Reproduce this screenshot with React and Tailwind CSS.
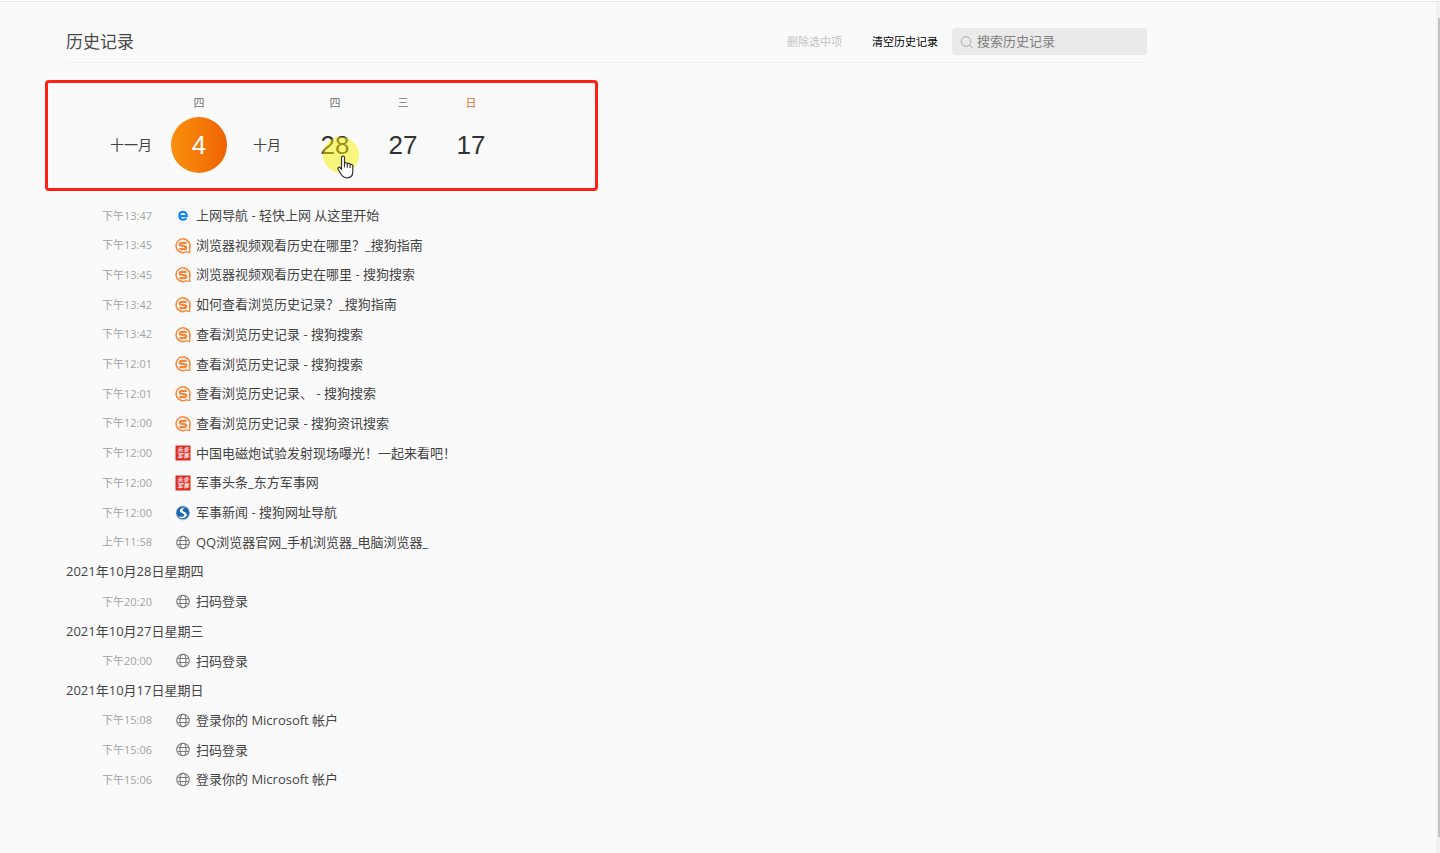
import { Fragment, useState } from 'react';

const months = [
  { label: '十一月', days: [{ date: '2021-11-04', day: 4, week: '四' }] },
  {
    label: '十月',
    days: [
      { date: '2021-10-28', day: 28, week: '四', hovered: true },
      { date: '2021-10-27', day: 27, week: '三' },
      { date: '2021-10-17', day: 17, week: '日', holiday: true },
    ],
  },
];

const groups = [
  {
    id: '2021-11-04',
    items: [
      { time: '下午13:47', icon: 'nav', title: '上网导航 - 轻快上网 从这里开始' },
      { time: '下午13:45', icon: 'sogou', title: '浏览器视频观看历史在哪里？_搜狗指南' },
      { time: '下午13:45', icon: 'sogou', title: '浏览器视频观看历史在哪里 - 搜狗搜索' },
      { time: '下午13:42', icon: 'sogou', title: '如何查看浏览历史记录？_搜狗指南' },
      { time: '下午13:42', icon: 'sogou', title: '查看浏览历史记录 - 搜狗搜索' },
      { time: '下午12:01', icon: 'sogou', title: '查看浏览历史记录 - 搜狗搜索' },
      { time: '下午12:01', icon: 'sogou', title: '查看浏览历史记录、 - 搜狗搜索' },
      { time: '下午12:00', icon: 'sogou', title: '查看浏览历史记录 - 搜狗资讯搜索' },
      { time: '下午12:00', icon: 'military', title: '中国电磁炮试验发射现场曝光！一起来看吧！' },
      { time: '下午12:00', icon: 'military', title: '军事头条_东方军事网' },
      { time: '下午12:00', icon: 'sogouNav', title: '军事新闻 - 搜狗网址导航' },
      { time: '上午11:58', icon: 'globe', title: 'QQ浏览器官网_手机浏览器_电脑浏览器_' },
    ],
  },
  {
    id: '2021-10-28',
    heading: '2021年10月28日星期四',
    items: [{ time: '下午20:20', icon: 'globe', title: '扫码登录' }],
  },
  {
    id: '2021-10-27',
    heading: '2021年10月27日星期三',
    items: [{ time: '下午20:00', icon: 'globe', title: '扫码登录' }],
  },
  {
    id: '2021-10-17',
    heading: '2021年10月17日星期日',
    items: [
      { time: '下午15:08', icon: 'globe', title: '登录你的 Microsoft 帐户' },
      { time: '下午15:06', icon: 'globe', title: '扫码登录' },
      { time: '下午15:06', icon: 'globe', title: '登录你的 Microsoft 帐户' },
    ],
  },
];

function NavIcon() {
  return (
    <svg viewBox="0 0 16 16" className="h-4 w-4 shrink-0" aria-hidden="true">
      <path d="M8 .6a7.200 7.200 0 1 0 0 14.400h6.600V8A7 7 0 0 0 8 .6Z" fill="#fff" stroke="#dde4ea" strokeWidth="0.8" />
      <path
        d="M4.500 8.200H11.800C11.900 5.400 10.300 3.900 8.100 3.900S4.300 5.500 4.300 7.800s1.500 3.900 3.900 3.900c1.400 0 2.400-.4 3.200-1.400"
        fill="none"
        stroke="#1684f5"
        strokeWidth="2.200"
      />
    </svg>
  );
}

function SogouIcon() {
  return (
    <svg viewBox="0 0 16 16" className="h-4 w-4 shrink-0" fill="none" stroke="#fb8435" aria-hidden="true">
      <path d="M12 13.400A6.900 6.900 0 1 1 14.300 10.600" strokeWidth="1.500" />
      <path d="M14.700 7.500V14.300H12.200" strokeWidth="1.300" />
      <path
        d="M11.700 4.900H6.900C5.500 4.900 4.800 5.500 4.800 6.400S5.500 7.700 6.700 7.800l2.600.3c1.300.1 2 .6 2 1.500S10.700 11.100 9.300 11.100H4.300"
        strokeWidth="2.100"
      />
    </svg>
  );
}

function MilitaryIcon() {
  return (
    <svg viewBox="0 0 16 16" className="h-4 w-4 shrink-0" aria-hidden="true">
      <rect x="0.500" y="0.500" width="15" height="15" fill="#e02d22" />
      <g fill="#fff" fillOpacity="0.9" fontSize="6" fontWeight="700" fontStyle="italic" textAnchor="middle">
        <text x="8" y="7">头条</text>
        <text x="8" y="13">军事</text>
      </g>
    </svg>
  );
}

function SogouNavIcon() {
  return (
    <svg viewBox="0 0 16 16" className="h-4 w-4 shrink-0" aria-hidden="true">
      <circle cx="8" cy="8" r="7.400" fill="#c9d0d6" />
      <circle cx="7.800" cy="7.800" r="6.500" fill="#1667ad" />
      <path
        d="M10.800 2.200C6.800 2.500 4.400 4.200 4.800 6.100 5.300 8.500 9.300 8 9.200 10.200 9.100 12 5.800 12.200 3.200 11.500 6 14.600 11.600 13.500 11.800 10.100 12 6.800 7.600 7.100 7.500 5.300 7.400 4 9 3 10.800 2.200Z"
        fill="#fff"
      />
    </svg>
  );
}

function GlobeIcon() {
  return (
    <svg viewBox="0 0 16 16" className="h-4 w-4 shrink-0" fill="none" stroke="#7a7a7a" strokeWidth="1.100" aria-hidden="true">
      <circle cx="8" cy="7.500" r="6.300" />
      <ellipse cx="8" cy="7.500" rx="3" ry="6.300" />
      <path d="M2.300 5.500H13.700M2.300 9.500H13.700" />
    </svg>
  );
}

const icons = {
  nav: NavIcon,
  sogou: SogouIcon,
  military: MilitaryIcon,
  sogouNav: SogouNavIcon,
  globe: GlobeIcon,
};

function Pointer() {
  return (
    <span className="pointer-events-none absolute top-5 left-[22px] h-[44px] w-9">
      <span className="block h-9 w-9 rounded-full bg-[#faf000]/50" />
      <svg viewBox="0 0 17 24" className="absolute top-[18px] left-3.5 h-6 w-[17px]">
        <path
          d="M4.500 14.500V2.500C4.500.600 7.500.600 7.500 2.500V8.500C8 7.300 10.200 7.500 10.300 9 11 7.900 13 8.300 13.100 9.700 14 8.900 15.800 9.400 15.800 11V16.500C15.800 20.500 13.500 22.800 10 22.800 6.500 22.800 5 21 3.600 18.500L1 14.200C.300 12.600 2.300 11.500 3.300 12.800Z"
          fill="#fff"
          stroke="#333"
          strokeWidth="1.200"
          strokeLinejoin="round"
        />
        <path d="M7.500 8.500V12.500M10.300 9V12.800M13.100 9.700V13" stroke="#333" strokeWidth="1.100" />
      </svg>
    </span>
  );
}

function Calendar({ selected, onSelect }) {
  return (
    <nav
      aria-label="日期"
      className="flex w-[553px] max-w-full rounded border-[3px] border-[#ff2015] pt-2 pb-[15px] pl-[49px]"
    >
      {months.map((month) => (
        <Fragment key={month.label}>
          <div className="mt-[26px] flex h-14 w-[68px] items-center justify-center text-sm text-[#444]">
            {month.label}
          </div>
          {month.days.map((d) => (
            <div key={d.date} className="flex w-[68px] flex-col items-center">
              <span className={`mb-0.5 text-[11px] leading-6 ${d.holiday ? 'text-[#e0703c]' : 'text-[#777]'}`}>
                {d.week}
              </span>
              <div className="relative flex w-full justify-center">
                <button
                  type="button"
                  onClick={() => onSelect(d.date)}
                  className={`h-14 w-14 rounded-full font-['Liberation_Sans',sans-serif] text-[26px] ${
                    selected === d.date ? 'bg-linear-to-r from-[#f9900c] to-[#ef6303] text-white' : 'text-[#333]'
                  }`}
                >
                  {d.day}
                </button>
                {d.hovered && <Pointer />}
              </div>
            </div>
          ))}
        </Fragment>
      ))}
    </nav>
  );
}

function HistoryItem({ item }) {
  const Icon = icons[item.icon];
  return (
    <li className="flex items-center">
      <span className="w-[86px] text-right text-[11px] text-[#a3a3a3]">{item.time}</span>
      <a href="#" className="ml-[23px] flex items-center gap-[5px] text-[13px] text-[#444]">
        <Icon />
        {item.title}
      </a>
    </li>
  );
}

export default function App() {
  const [selected, setSelected] = useState('2021-11-04');
  const [query, setQuery] = useState('');

  return (
    <div className="min-h-screen bg-white pt-px font-['Open_Sans','Noto_Sans_CJK_SC',sans-serif]">
      <div className="flex min-h-[calc(100vh-1px)] border-t border-[#e3e6e8] bg-[#fafafa]">
        <main className="flex-1 px-[45px] pt-[26px]">
          <header className="ml-[21px] flex max-w-[1081px] items-center border-b border-[#efefef] pb-[7px]">
            <h1 className="text-[17px] leading-[27px] text-[#4a4a4a]">历史记录</h1>
            <button type="button" disabled className="ml-auto pt-0.5 text-[11px] text-[#c4c4c4]">
              删除选中项
            </button>
            <button type="button" className="ml-[30px] pt-0.5 text-[11px] text-black">
              清空历史记录
            </button>
            <label className="ml-3.5 flex h-[27px] w-[195px] items-center gap-0.5 rounded bg-[#eaeaea] px-[7px]">
              <svg viewBox="0 0 16 16" className="h-4 w-4 shrink-0" fill="none" stroke="#aaa" aria-hidden="true">
                <circle cx="7" cy="7.500" r="4.800" />
                <path d="M10.500 11L13.500 14" />
              </svg>
              <input
                type="text"
                value={query}
                onChange={(e) => setQuery(e.target.value)}
                placeholder="搜索历史记录"
                aria-label="搜索历史记录"
                className="w-full min-w-0 bg-transparent text-[13px] text-[#333] outline-none placeholder:text-[#808080]"
              />
            </label>
          </header>

          <div className="mt-[17px]">
            <Calendar selected={selected} onSelect={setSelected} />
          </div>

          <ul className="mt-2.5 ml-[21px] grid min-h-[594px] auto-rows-fr">
            {groups.map((group) => (
              <Fragment key={group.id}>
                {group.heading && (
                  <li className="flex items-center text-[13px] text-[#444]">
                    <h2>{group.heading}</h2>
                  </li>
                )}
                {group.items.map((item, i) => (
                  <HistoryItem key={i} item={item} />
                ))}
              </Fragment>
            ))}
          </ul>
        </main>

        {/* Scrollbar */}
        <div className="flex w-1 justify-end bg-[#f1f1f1] py-4">
          <div className="w-0.5 bg-[#c1c1c1]" />
        </div>
      </div>
    </div>
  );
}
